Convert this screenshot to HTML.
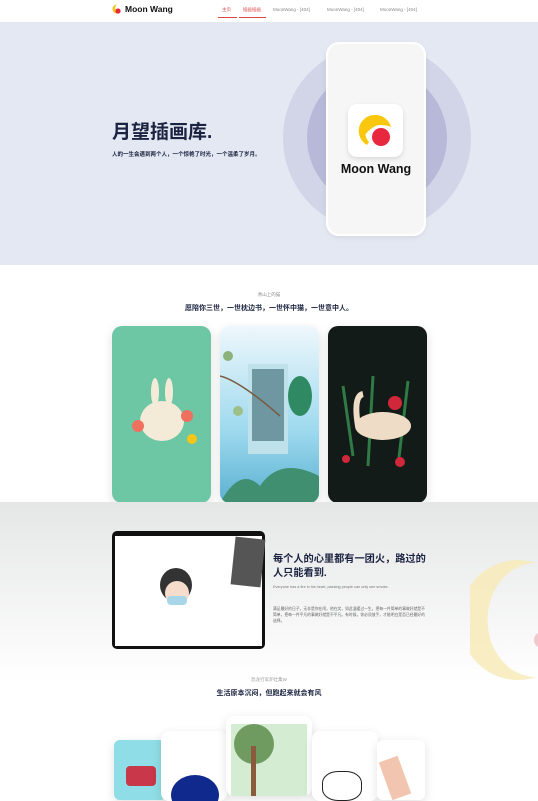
<!DOCTYPE html>
<html><head><meta charset="utf-8"><style>
*{margin:0;padding:0;box-sizing:border-box}
body{width:538px;height:786px;overflow:hidden;background:#fff;font-family:"Liberation Sans","Noto Sans CJK SC",sans-serif;position:relative}
.a{position:absolute}
.nav{font-size:4.5px;color:#888;top:7px}
.card{position:absolute;border-radius:10px;overflow:hidden;box-shadow:0 3px 10px rgba(0,0,0,.12)}
</style></head><body>
<!-- header -->
<div class="a" style="left:0;top:0;width:538px;height:22px;background:#fff"></div>
<svg class="a" style="left:111px;top:3px" width="12" height="12" viewBox="0 0 12 12"><path d="M6 1.5A4.5 4.5 0 1 0 10 8 3.2 3.2 0 1 1 6 1.5Z" fill="#f5c518"/><circle cx="7" cy="8" r="2.6" fill="#e8283f"/></svg>
<div class="a" style="left:125px;top:4px;font-size:8.5px;font-weight:bold;color:#111">Moon Wang</div>
<div class="a nav" style="left:222px;color:#d84a4a">主页</div>
<div class="a" style="left:218px;top:17px;width:19px;height:1px;background:#d84a4a"></div>
<div class="a nav" style="left:243px;color:#d84a4a">插画插画</div>
<div class="a" style="left:239px;top:17px;width:27px;height:1px;background:#d84a4a"></div>
<div class="a nav" style="left:273px">MoonWang - [404]</div>
<div class="a nav" style="left:327px">MoonWang - [404]</div>
<div class="a nav" style="left:380px">MoonWang - [404]</div>
<!-- hero -->
<div class="a" style="left:0;top:22px;width:538px;height:243px;background:#e4e8f2"></div>
<div class="a" style="left:283px;top:44px;width:188px;height:188px;border-radius:50%;background:#d2d5e8"></div>
<div class="a" style="left:307px;top:68px;width:140px;height:140px;border-radius:50%;background:#b8b9d9"></div>
<div class="a" style="left:326px;top:42px;width:100px;height:194px;border-radius:13px;background:#f6f6f7;border:2px solid #fff;box-shadow:0 2px 6px rgba(0,0,0,.06)"></div>
<div class="a" style="left:348px;top:104px;width:55px;height:53px;border-radius:9px;background:#fff;box-shadow:0 2px 5px rgba(0,0,0,.12)"></div>
<svg class="a" style="left:353px;top:109px" width="44" height="44" viewBox="0 0 44 44"><path d="M22 6A16 16 0 0 0 14 36 L16 33 A13 13 0 0 1 36 14 A16 16 0 0 0 22 6Z" fill="#f9c80e"/><path d="M22 6A16 16 0 0 0 10 30 Q14 20 24 17 Q32 15 38 18 A16 16 0 0 0 22 6Z" fill="#f9c80e"/><circle cx="27" cy="27" r="11" fill="#fff"/><circle cx="28" cy="28" r="9" fill="#e8283f"/></svg>
<div class="a" style="left:326px;top:162px;width:100px;text-align:center;font-size:12.5px;font-weight:bold;color:#111">Moon Wang</div>
<div class="a" style="left:112px;top:117px;font-size:19px;font-weight:bold;color:#1b2340">月望插画库.</div>
<div class="a" style="left:112px;top:150px;font-size:5.5px;font-weight:bold;color:#1b2340">人的一生会遇到两个人，一个惊艳了时光，一个温柔了岁月。</div>
<!-- section 2 -->
<div class="a" style="left:0;top:292px;width:538px;text-align:center;font-size:4.5px;color:#888">青山上的猫</div>
<div class="a" style="left:0;top:303px;width:538px;text-align:center;font-size:7px;font-weight:bold;color:#1b2340">愿陪你三世，一世枕边书，一世怀中猫，一世意中人。</div>
<div class="card" style="left:112px;top:326px;width:99px;height:177px;background:#6ec7a4">
<svg width="99" height="177"><ellipse cx="50" cy="95" rx="22" ry="20" fill="#f3ead8"/><ellipse cx="43" cy="66" rx="4" ry="14" fill="#f3ead8"/><ellipse cx="57" cy="66" rx="4" ry="14" fill="#f3ead8"/><circle cx="26" cy="100" r="6" fill="#f07060"/><circle cx="75" cy="90" r="6" fill="#f07060"/><circle cx="80" cy="113" r="5" fill="#f5c518"/></svg></div>
<div class="card" style="left:220px;top:326px;width:99px;height:177px;background:linear-gradient(#eef7fc,#9dd9ee 60%,#5ab0d0)">
<svg width="99" height="177"><rect x="28" y="38" width="40" height="90" fill="#bfe2ea"/><rect x="32" y="43" width="32" height="72" fill="#6f97a2"/><path d="M0 50 Q20 55 60 90" stroke="#7a5a40" stroke-width="1.5" fill="none"/><circle cx="8" cy="30" r="5" fill="#8ab27a"/><circle cx="18" cy="85" r="5" fill="#9fbf88"/><ellipse cx="80" cy="70" rx="12" ry="20" fill="#2f8a64"/><path d="M0 177 Q20 140 40 160 Q60 130 99 150 V177Z" fill="#3f8f70"/></svg></div>
<div class="card" style="left:328px;top:326px;width:99px;height:177px;background:#121b17">
<svg width="99" height="177"><path d="M15 60 L25 130 M80 55 L70 140 M45 50 L40 140" stroke="#2f7a45" stroke-width="3"/><ellipse cx="55" cy="100" rx="28" ry="14" fill="#efdcc7"/><path d="M30 100 Q25 70 35 68" stroke="#efdcc7" stroke-width="6" fill="none"/><circle cx="67" cy="77" r="7" fill="#d0283a"/><circle cx="72" cy="136" r="5" fill="#d0283a"/><circle cx="18" cy="133" r="4" fill="#d0283a"/></svg></div>
<!-- section 3 -->
<div class="a" style="left:0;top:502px;width:538px;height:180px;background:linear-gradient(#e5e6e6,#fff)"></div>
<svg class="a" style="left:470px;top:555px" width="68" height="130"><path d="M66 8 A58 60 0 1 0 66 122 A40 47 0 1 1 66 8Z" fill="#f8eab8" opacity=".85"/><circle cx="72" cy="85" r="8" fill="#f3c8cc"/></svg>
<div class="a" style="left:112px;top:531px;width:153px;height:118px;border-radius:5px;background:#111;padding:5px 3px 3px 3px">
<div style="width:100%;height:100%;background:#fff;position:relative">
<div class="a" style="left:118px;top:2px;width:30px;height:48px;background:#555;transform:rotate(6deg)"></div>
<div class="a" style="left:45px;top:32px;width:32px;height:34px;border-radius:50%;background:#333"></div>
<div class="a" style="left:50px;top:45px;width:24px;height:24px;border-radius:50%;background:#f5dccb"></div>
<div class="a" style="left:52px;top:60px;width:20px;height:9px;border-radius:4px;background:#a9d5e8"></div>
</div></div>
<div class="a" style="left:273px;top:553px;font-size:10.2px;font-weight:bold;color:#1b2340;line-height:14px;width:175px">每个人的心里都有一团火，路过的<br>人只能看到.</div>
<div class="a" style="left:273px;top:585px;font-size:3.8px;color:#777">Everyone has a fire in his heart, passing people can only see smoke.</div>
<div class="a" style="left:273px;top:606px;width:152px;font-size:3.8px;color:#666;line-height:6px">满足最好的日子，无非是你在闹，他在笑，如此温暖过一生。把每一件简单的事做好就是不简单，把每一件平凡的事做好就是不平凡。有时候，你必须放手，才能明白是否已经最好的选择。</div>
<!-- section 4 -->
<div class="a" style="left:0;top:677px;width:538px;text-align:center;font-size:4.5px;color:#999">恐龙行军炉灶集W</div>
<div class="a" style="left:0;top:688px;width:538px;text-align:center;font-size:7px;font-weight:bold;color:#1b2340">生活原本沉闷，但跑起来就会有风</div>
<div class="card" style="left:114px;top:740px;width:52px;height:60px;background:#8fdde6;border-radius:6px"><div class="a" style="left:12px;top:26px;width:30px;height:20px;background:#c8374a;border-radius:4px"></div></div>
<div class="card" style="left:161px;top:731px;width:66px;height:70px;background:#fff;border-radius:8px"><div class="a" style="left:10px;top:44px;width:48px;height:40px;border-radius:50%;background:#0f2a8c"></div></div>
<div class="card" style="left:226px;top:716px;width:86px;height:80px;background:#fff;border-radius:8px"><div class="a" style="left:5px;top:8px;width:76px;height:80px;background:#d4ecd2"></div><div class="a" style="left:8px;top:8px;width:40px;height:40px;border-radius:50%;background:#6f9a60"></div><div class="a" style="left:25px;top:30px;width:5px;height:60px;background:#8b5a3c"></div></div>
<div class="card" style="left:312px;top:731px;width:66px;height:70px;background:#fff;border-radius:8px"><div class="a" style="left:10px;top:40px;width:40px;height:30px;border:1.5px solid #222;border-radius:40%"></div></div>
<div class="card" style="left:377px;top:740px;width:48px;height:60px;background:#fff;border-radius:6px"><div class="a" style="left:8px;top:18px;width:20px;height:40px;background:#f2c5b0;transform:rotate(-20deg)"></div></div>
</body></html>
